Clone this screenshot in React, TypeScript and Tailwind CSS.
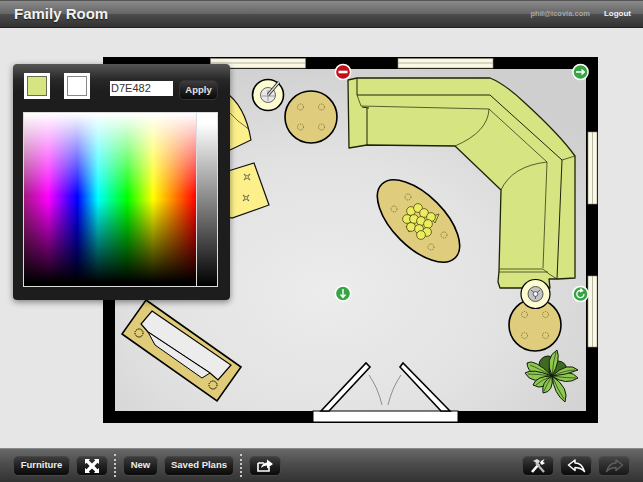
const font = { fontFamily: '"Liberation Sans", Arial, sans-serif' };

function ToolButton({ children, className = "" }: { children: React.ReactNode; className?: string }) {
  return (
    <button
      type="button"
      className={`flex h-5 items-center justify-center rounded-[5px] border border-[#474747] bg-[linear-gradient(#3d3d3d,#202020_50%,#0a0a0a)] text-[9.5px] font-bold text-[#ececec] ${className}`}
    >
      {children}
    </button>
  );
}

function Separator() {
  return <div className="h-[23px] w-0 border-l-2 border-dotted border-[#c8c8c8]" />;
}

function Pegs({ cx, cy, dx, dy, r = 3 }: { cx: number; cy: number; dx: number; dy: number; r?: number }) {
  return (
    <g fill="none" stroke="#55501f" strokeWidth="0.7" strokeDasharray="1.2 1">
      {[[-dx, -dy], [dx, -dy], [-dx, dy], [dx, dy]].map(([x, y]) => (
        <circle key={`${x}${y}`} cx={cx + x} cy={cy + y} r={r} />
      ))}
    </g>
  );
}

function Leaf({ d, vein }: { d: string; vein: string }) {
  return (
    <g>
      <path d={d} />
      <path d={vein} fill="none" strokeWidth="0.6" />
    </g>
  );
}

function FloorPlan() {
  return (
    <svg viewBox="0 28 643 420" width="643" height="420" className="block">
      <defs>
        <radialGradient id="floor" cx="45%" cy="65%" r="70%">
          <stop offset="0" stopColor="#ececec" />
          <stop offset="0.55" stopColor="#e2e2e2" />
          <stop offset="1" stopColor="#cfcfcf" />
        </radialGradient>
      </defs>

      {/* room */}
      <rect x="103" y="57" width="495" height="366" fill="#000" />
      <rect x="115" y="69" width="471" height="342" fill="url(#floor)" />

      {/* windows */}
      <g fill="#fbf9e6" stroke="#8c8c78" strokeWidth="0.6">
        <rect x="210.5" y="58.5" width="95" height="9.5" />
        <rect x="398" y="58.5" width="95" height="9.5" />
        <rect x="588" y="132" width="9" height="72" />
        <rect x="588" y="276" width="9" height="71" />
        <path d="M210.5 63h95M398 63h95M592.5 132v72M592.5 276v71" />
      </g>

      {/* door */}
      <rect x="313" y="411" width="145" height="11" fill="#fff" stroke="#000" strokeWidth="1" />
      <g fill="#fff" stroke="#000" strokeWidth="1.6">
        <path d="M321 411 L366 363 L370 367 L329 411Z" />
        <path d="M450 411 L403 363 L400 367 L441 411Z" />
      </g>
      <path d="M369 375 Q378 388 382 405 M401 375 Q392 388 388 405" fill="none" stroke="#777" strokeWidth="0.8" />

      {/* rug */}
      <path d="M146 300 L241 367 L217 401 L122 334Z" fill="#e0cc78" stroke="#000" strokeWidth="1.6" />
      <path d="M152 311 L231 365 L218 380 L210 373 L148 332 L141 324Z" fill="#ececec" stroke="#000" strokeWidth="1.2" />
      <path d="M148 332 L210 373 L202 378 L155 345Z" fill="#ececec" stroke="#000" strokeWidth="1" />
      <Pegs cx={139} cy={333} dx={0} dy={0} r={4} />
      <Pegs cx={213} cy={385} dx={0} dy={0} r={4} />

      {/* armchair and cushion behind the popover */}
      <path d="M225 92 Q245 105 251 140 L228 151 L222 151Z" fill="#fdf08a" stroke="#111" strokeWidth="1.2" />
      <path d="M230 113 Q238 122 246 127 Q249 130 248 127" fill="none" stroke="#333" strokeWidth="0.7" />
      <path d="M225 172 L254 163 L269 205 L232 218 L225 216Z" fill="#fdf08a" stroke="#111" strokeWidth="1.2" />
      <g stroke="#333" strokeWidth="0.6" fill="none">
        <path d="M244 174l3 2l3-2l-2 3l2 3l-3-2l-3 2l2-3Z" />
        <path d="M243 195l3 2l3-2l-2 3l2 3l-3-2l-3 2l2-3Z" />
      </g>

      {/* side tables */}
      <circle cx="311" cy="117" r="26" fill="#dfcc7c" stroke="#000" strokeWidth="1.6" />
      <Pegs cx={311} cy={117} dx={10.5} dy={10} />
      <circle cx="535" cy="325" r="26" fill="#dfcc7c" stroke="#000" strokeWidth="1.6" />
      <Pegs cx={535} cy={325} dx={10.5} dy={10.5} />

      {/* sectional sofa */}
      <g fill="#d7e482" stroke="#1c2408" strokeLinejoin="round">
        <path
          d="M348 80 L357 78 L490 78 Q505 84 525 103 Q560 135 575 156 L575 278 L558 279 L549 279 L550 288 L500 288 L498 282 L499 271 L501 190 L455 146 L367 145 L349 148 Z"
          strokeWidth="1.3"
        />
        <path d="M357 78 L357 95 L490 95 L562 160 L557 279 M367 108 L367 145 M362 107 L369 108" fill="none" strokeWidth="1" />
        <path
          d="M357 95 L361 106 L489 109 L547 162 L543 268 M489 109 Q488 132 455 146 M501 190 Q512 166 547 162 M562 160 L575 156 M499 269 L543 269 L549 274 L557 279 M499 272 L548 272"
          fill="none"
          strokeWidth="0.7"
        />
      </g>

      {/* lamps */}
      <circle cx="268" cy="95" r="15.5" fill="#fdfcd0" stroke="#000" strokeWidth="1.6" />
      <circle cx="268" cy="95" r="7.5" fill="#e8e8e8" stroke="#444" strokeWidth="0.8" />
      <path d="M262 96h13M268 90v11" stroke="#666" strokeWidth="0.6" />
      <path d="M268 95 L279 82" stroke="#222" strokeWidth="3" />
      <path d="M268 95 L279 82" stroke="#ddd" strokeWidth="1.4" />
      <circle cx="535.5" cy="294" r="14.5" fill="#fdfcd0" stroke="#000" strokeWidth="1.2" />
      <circle cx="535.5" cy="294" r="7.5" fill="#c4c4c4" stroke="#333" strokeWidth="0.8" />
      <path d="M531 290l4.5 4l4.5-4M535.5 294v5" stroke="#333" strokeWidth="0.7" fill="none" />
      <circle cx="535.5" cy="294" r="2.4" fill="#f4f4f4" stroke="#333" strokeWidth="0.7" />

      {/* coffee table */}
      <ellipse cx="418.5" cy="221" rx="52" ry="26" transform="rotate(45 418.5 221)" fill="#dfcc7c" stroke="#000" strokeWidth="1.6" />
      <g fill="none" stroke="#55501f" strokeWidth="0.7" strokeDasharray="1.2 1">
        <circle cx="408" cy="197" r="3" />
        <circle cx="394" cy="209" r="3" />
        <circle cx="444" cy="235" r="3" />
        <circle cx="431" cy="247" r="3" />
      </g>
      <g fill="#ecec60" stroke="#4d4d10" strokeWidth="0.8">
        <path d="M430 217l9-3l-4 9Z" fill="#cfdc70" />
        <path d="M406 226l3 6l4-3Z" fill="#cfdc70" />
        {[[411, 211], [418, 208], [424, 213], [431, 217], [407, 219], [414, 219], [421, 221], [428, 224], [411, 227], [419, 229], [427, 232], [421, 235]].map(([x, y]) => (
          <circle key={`${x}-${y}`} cx={x} cy={y} r="4.4" />
        ))}
      </g>

      {/* plant */}
      <g fill="#8fc850" stroke="#0e1c06" strokeWidth="1" strokeLinejoin="round">
        <circle cx="548" cy="365" r="9" fill="#3f6a22" />
        <circle cx="558" cy="370" r="9" fill="#3f6a22" />
        <Leaf d="M552 376 Q534 358 527 363 Q528 378 552 376Z" vein="M552 376 Q538 368 530 365" />
        <Leaf d="M552 376 Q532 368 525 373 Q532 386 552 376Z" vein="M552 376 Q538 374 528 374" />
        <Leaf d="M552 376 Q536 376 533 385 Q545 392 552 376Z" vein="M552 376 Q541 380 536 385" />
        <Leaf d="M552 376 Q541 382 543 393 Q554 392 552 376Z" vein="M552 376 Q547 384 544 391" />
        <Leaf d="M552 376 Q554 394 565 402 Q570 388 552 376Z" vein="M552 376 Q558 390 564 399" />
        <Leaf d="M552 376 Q566 386 578 378 Q570 368 552 376Z" vein="M552 376 Q566 378 576 378" />
        <Leaf d="M552 376 Q566 375 578 370 Q568 361 552 376Z" vein="M552 376 Q566 370 575 370" />
        <Leaf d="M552 376 Q561 360 557 350 Q544 358 552 376Z" vein="M552 376 Q553 362 556 352" />
      </g>

      {/* handles */}
      <g stroke="#fff" strokeWidth="1.5">
        <circle cx="343" cy="72" r="7.6" fill="#c1101a" />
        <circle cx="580.5" cy="72" r="7.6" fill="#38a545" />
        <circle cx="343" cy="293.5" r="7.6" fill="#38a545" />
        <circle cx="580.5" cy="294" r="7.6" fill="#38a545" />
      </g>
      <path d="M338.5 72h9" stroke="#fff" strokeWidth="2.6" />
      <path d="M576 72h8M581.5 69.5l2.8 2.5l-2.8 2.5" stroke="#fff" strokeWidth="1.4" fill="none" />
      <path d="M343 289v8M340.5 294.5l2.5 3l2.5-3" stroke="#fff" strokeWidth="1.4" fill="none" />
      <path d="M584 294a3.6 3.6 0 1 1-2-3.2M580.5 288.5l2 2.2l-2.6 1.2" stroke="#fff" strokeWidth="1.3" fill="none" />
    </svg>
  );
}

function ColorPopover() {
  return (
    <div className="absolute left-[13px] top-[36px] h-[236px] w-[217px] rounded-[4px] bg-[linear-gradient(#555_0px,#272727_16px,#1d1d1d_28px)] shadow-[0_2px_6px_rgba(0,0,0,0.45)]">
      <div className="flex h-[48px] items-start pl-[11px] pt-[9px]">
        <div className="h-[26px] w-[26px] border-[3px] border-white bg-[#d7e482] outline outline-1 -outline-offset-4 outline-[#6b6b55]" />
        <div className="ml-[14px] h-[26px] w-[26px] border-[3px] border-white bg-white outline outline-1 -outline-offset-4 outline-[#888]" />
        <div className="ml-[20px] mt-[8px] flex h-[15px] w-[63px] items-center bg-white pl-px text-[11px] text-[#333]">D7E482</div>
        <button
          type="button"
          className="ml-[6px] mt-[7px] h-5 w-[39px] rounded-[5px] border border-[#333] bg-[linear-gradient(#3d3d3d,#202020_50%,#0a0a0a)] text-[9.5px] font-bold text-[#e4e4e4]"
        >
          Apply
        </button>
      </div>
      <div className="mx-[10px] flex h-[175px] w-[195px] gap-px border border-[#dcdcdc] bg-[#dcdcdc]">
        <div className="w-[172px] bg-[linear-gradient(to_bottom,#fff,rgba(255,255,255,0)_48%,rgba(0,0,0,0)_50%,#000_98%),linear-gradient(to_right,#a01a80,#ff00ff_14%,#0000ff_31%,#00ffff_43%,#00ff00_60%,#ffff00_75%,#ff0000_100%)]" />
        <div className="flex-1 bg-[linear-gradient(#fff,#fff_6%,#000)]" />
      </div>
    </div>
  );
}

export default function App() {
  return (
    <div style={font} className="flex h-[482px] w-[643px] flex-col overflow-hidden bg-[#e6e6e6]">
      <header className="flex h-[28px] shrink-0 items-center justify-between border-t border-t-[#555] border-b border-b-[#222] bg-[linear-gradient(#8a8a8a,#646464_50%,#4c4c4c_52%,#323232)] pl-[14px] pr-[12px]">
        <h1 className="text-[15px] font-bold text-[#f2f2f2] [text-shadow:0_1px_1px_rgba(0,0,0,0.6)]">Family Room</h1>
        <div className="flex items-center gap-[14px] text-[7.5px] font-bold">
          <span className="text-[#a8a8a8]">phil@icovia.com</span>
          <span className="text-[8px] text-[#f4f4f4]">Logout</span>
        </div>
      </header>

      <main className="relative h-[420px] shrink-0 bg-[#e6e6e6]">
        <FloorPlan />
        <ColorPopover />
      </main>

      <footer className="flex flex-1 items-center justify-between border-t border-t-[#8a8a8a] bg-[linear-gradient(#686868,#4c4c4c_45%,#323232)] pl-[13px] pr-[13px]">
        <div className="flex items-center">
          <ToolButton className="w-[57px]">Furniture</ToolButton>
          <ToolButton className="ml-[6px] w-[32px]">
            <svg width="14" height="14" viewBox="0 0 14 14" fill="#fff">
              <path d="M0 0h5L3.8 1.6 7 4.6 10.2 1.6 9 0h5v5l-1.6-1.2L9.4 7l3 3.2L14 9v5H9l1.2-1.6L7 9.4 3.8 12.4 5 14H0V9l1.6 1.2L4.6 7 1.6 3.8 0 5Z" />
            </svg>
          </ToolButton>
          <div className="mx-[6px]"><Separator /></div>
          <ToolButton className="ml-[1px] w-[35px]">New</ToolButton>
          <ToolButton className="ml-[6px] w-[70px]">Saved Plans</ToolButton>
          <div className="mx-[6px]"><Separator /></div>
          <ToolButton className="ml-[1px] w-[32px]">
            <svg width="17" height="13" viewBox="0 0 17 13">
              <path d="M1 4h6M1 4v8h11V8" fill="none" stroke="#fff" strokeWidth="1.6" />
              <path d="M4 9 Q5 4 10 3.5V0.5L16 5l-6 4.5V6.5Q6 6.5 4 9Z" fill="#fff" />
            </svg>
          </ToolButton>
        </div>
        <div className="flex items-center gap-[6px]">
          <ToolButton className="w-[32px]">
            <svg width="16" height="15" viewBox="0 0 16 15">
              <path d="M2 14 L9 6" stroke="#fff" strokeWidth="2.6" />
              <path d="M14 14 L6 5" stroke="#bbb" strokeWidth="2.2" />
              <path d="M3 3 L7 1 L10 3 L8 6 L5 4Z" fill="#ddd" />
              <path d="M11 3 L14.5 1 L13 4 L15 5 L12 7 L10 5Z" fill="#fff" />
            </svg>
          </ToolButton>
          <ToolButton className="w-[32px]">
            <svg width="19" height="14" viewBox="0 0 19 14">
              <path d="M1.5 6 L8 1 V4 Q15 4 17.5 12.5 Q13.5 8.5 8 8.5 V11.5Z" fill="#111" stroke="#fff" strokeWidth="1.5" strokeLinejoin="round" />
            </svg>
          </ToolButton>
          <ToolButton className="w-[32px] opacity-70">
            <svg width="19" height="14" viewBox="0 0 19 14">
              <path d="M17.5 6 L11 1 V4 Q4 4 1.5 12.5 Q5.5 8.5 11 8.5 V11.5Z" fill="#222" stroke="#666" strokeWidth="1.5" strokeLinejoin="round" />
            </svg>
          </ToolButton>
        </div>
      </footer>
    </div>
  );
}
